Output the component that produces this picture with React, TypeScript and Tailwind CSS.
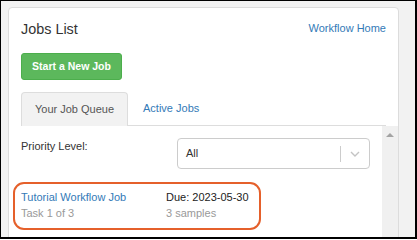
import * as React from 'react';

const font = { fontFamily: '"Liberation Sans", Arial, sans-serif' };

const JobRow = () => (
  <div className="relative mt-[20px] flex text-[11px] leading-[16px]">
    {/* callout drawn around the first job */}
    <div className="pointer-events-none absolute left-[-8px] top-[-7px] h-[48px] w-[248px] rounded-[11px] border-2 border-[#e5602b]" />
    <div className="w-[145px]">
      <div className="text-[#337ab7]">Tutorial Workflow Job</div>
      <div className="text-[#999]">Task 1 of 3</div>
    </div>
    <div>
      <div className="text-[#222]">Due: 2023-05-30</div>
      <div className="text-[#999]">3 samples</div>
    </div>
  </div>
);

export default function App() {
  return (
    <div
      className="h-[239px] w-[417px] overflow-hidden border-t border-l border-r-2 border-b-2 border-black bg-[#f2f2f2]"
      style={font}
    >
      <div className="ml-[7px] mt-[6px] h-[260px] w-[391px] rounded-[4px] border border-[#dcdcdc] bg-white flex flex-col">
        {/* Header */}
        <div className="px-[12px]">
          <div className="flex items-start justify-between pt-[13px]">
            <h3 className="text-[14.4px] leading-[17px] text-[#333]">Jobs List</h3>
            <a className="mt-[1px] text-[11px] leading-[13px] text-[#337ab7]">Workflow Home</a>
          </div>
          <button className="mt-[15px] flex h-[27px] w-[101px] items-center justify-center rounded-[3px] border border-[#4cae4c] bg-[#5cb85c] text-[10.5px] font-bold text-white">
            Start a New Job
          </button>
          <div className="mt-[12px] flex border-b border-[#dddddd]">
            <div className="-mb-px flex h-[34px] w-[107px] items-center justify-center rounded-t-[4px] border border-b-0 border-[#dddddd] bg-[#f2f2f2] text-[11px] text-[#555]">
              Your Job Queue
            </div>
            <div className="flex h-[33px] items-center pl-[15px] text-[11px] text-[#337ab7]">
              Active Jobs
            </div>
          </div>
        </div>

        {/* Tab content with scrollbar */}
        <div className="flex flex-1">
          <div className="flex-1 px-[12px] pt-[12px]">
            <div className="flex items-start justify-between">
              <span className="mt-[2px] text-[11px] leading-[13px] text-[#333]">Priority Level:</span>
              <div className="flex h-[31px] w-[193px] items-center rounded-[4px] border border-[#cccccc]">
                <span className="flex-1 pl-[8px] text-[11px] text-[#333]">All</span>
                <span className="h-[16px] w-px bg-[#cccccc]" />
                <span className="flex w-[28px] justify-center">
                  <svg width="10" height="6" viewBox="0 0 10 6" fill="none">
                    <path d="M1 1l4 4 4-4" stroke="#c4c4c4" strokeWidth="1.4" />
                  </svg>
                </span>
              </div>
            </div>
            <JobRow />
          </div>
          <div className="flex w-[16px] justify-center bg-[#f0f0f0] pt-[7px]">
            <svg width="8" height="4" viewBox="0 0 8 4">
              <path d="M0 4L4 0L8 4Z" fill="#a3a3a3" />
            </svg>
          </div>
        </div>
      </div>
    </div>
  );
}
